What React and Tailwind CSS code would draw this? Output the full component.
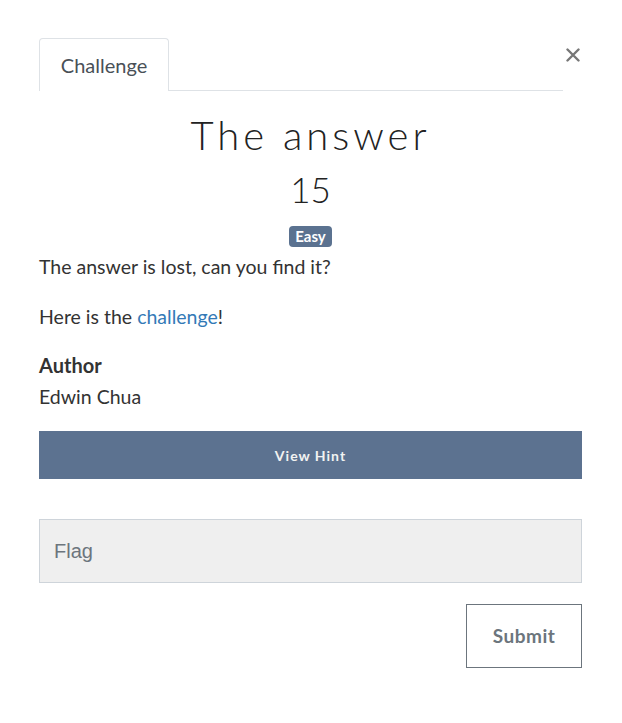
import React from 'react';

const Close = () => (
    <svg width="14" height="14" viewBox="0 0 14 14" className="block">
        <path d="M1.5 1.5 L12.5 12.5 M12.5 1.5 L1.5 12.5" stroke="#777" strokeWidth="2.4" strokeLinecap="round" />
    </svg>
);

const App = () => {
    return (
        <div className="w-[622px] min-h-[723px] bg-white pl-[39px] pr-[40px] pt-[38px] font-['Lato',sans-serif] text-[#333]">
            {/* header: tabs + close */}
            <div className="flex items-start">
                <div className="flex-1 flex border-b border-[#dee2e6] h-[53px]">
                    <div className="w-[130px] h-[53px] -mb-px bg-white border border-b-0 border-[#dee2e6] rounded-t-[4px] flex items-center justify-center text-[20px] text-[#495057]">
                        Challenge
                    </div>
                </div>
                <button className="ml-[3px] mt-[10px] mr-[2px] p-0">
                    <Close />
                </button>
            </div>

            <h1 className="mt-[20px] text-center text-[40px] leading-[48px] font-light tracking-[4px] text-[#222]">
                The answer
            </h1>
            <div className="text-center text-[35px] leading-[42px] font-light text-[#222] mt-[9px]">
                15
            </div>
            <div className="flex justify-center mt-[16px]">
                <span className="h-[21px] px-[6px] rounded-[4px] bg-[#5b7290] text-white text-[15px] font-bold leading-[21px]">
                    Easy
                </span>
            </div>

            <p className="mt-[5px] text-[19.5px] leading-[29px]">The answer is lost, can you find it?</p>
            <p className="mt-[21px] text-[19.5px] leading-[29px]">
                Here is the <a href="#" className="text-[#337ab7]">challenge</a>!
            </p>
            <h4 className="mt-[19px] text-[20px] leading-[31px] font-bold">Author</h4>
            <p className="mt-[1px] text-[19.5px] leading-[29px]">Edwin Chua</p>

            <button className="mt-[20px] w-full h-[48px] bg-[#5c7290] text-[#f2f2f2] text-[14px] font-bold tracking-[1px]">
                View Hint
            </button>

            <input
                placeholder="Flag"
                className="mt-[40px] block w-full h-[64px] bg-[#efefef] border border-[#ced4da] pl-[14px] pr-[15px] font-['Liberation_Sans',Arial,sans-serif] text-[20px] text-[#495057] placeholder:text-[#6c757d] outline-none"
            />

            <div className="flex justify-end mt-[21px]">
                <button className="w-[116px] h-[64px] border border-[#6c757d] text-[#6c757d] text-[19px] font-bold tracking-[0.5px]">
                    Submit
                </button>
            </div>
        </div>
    );
};

export default App;
